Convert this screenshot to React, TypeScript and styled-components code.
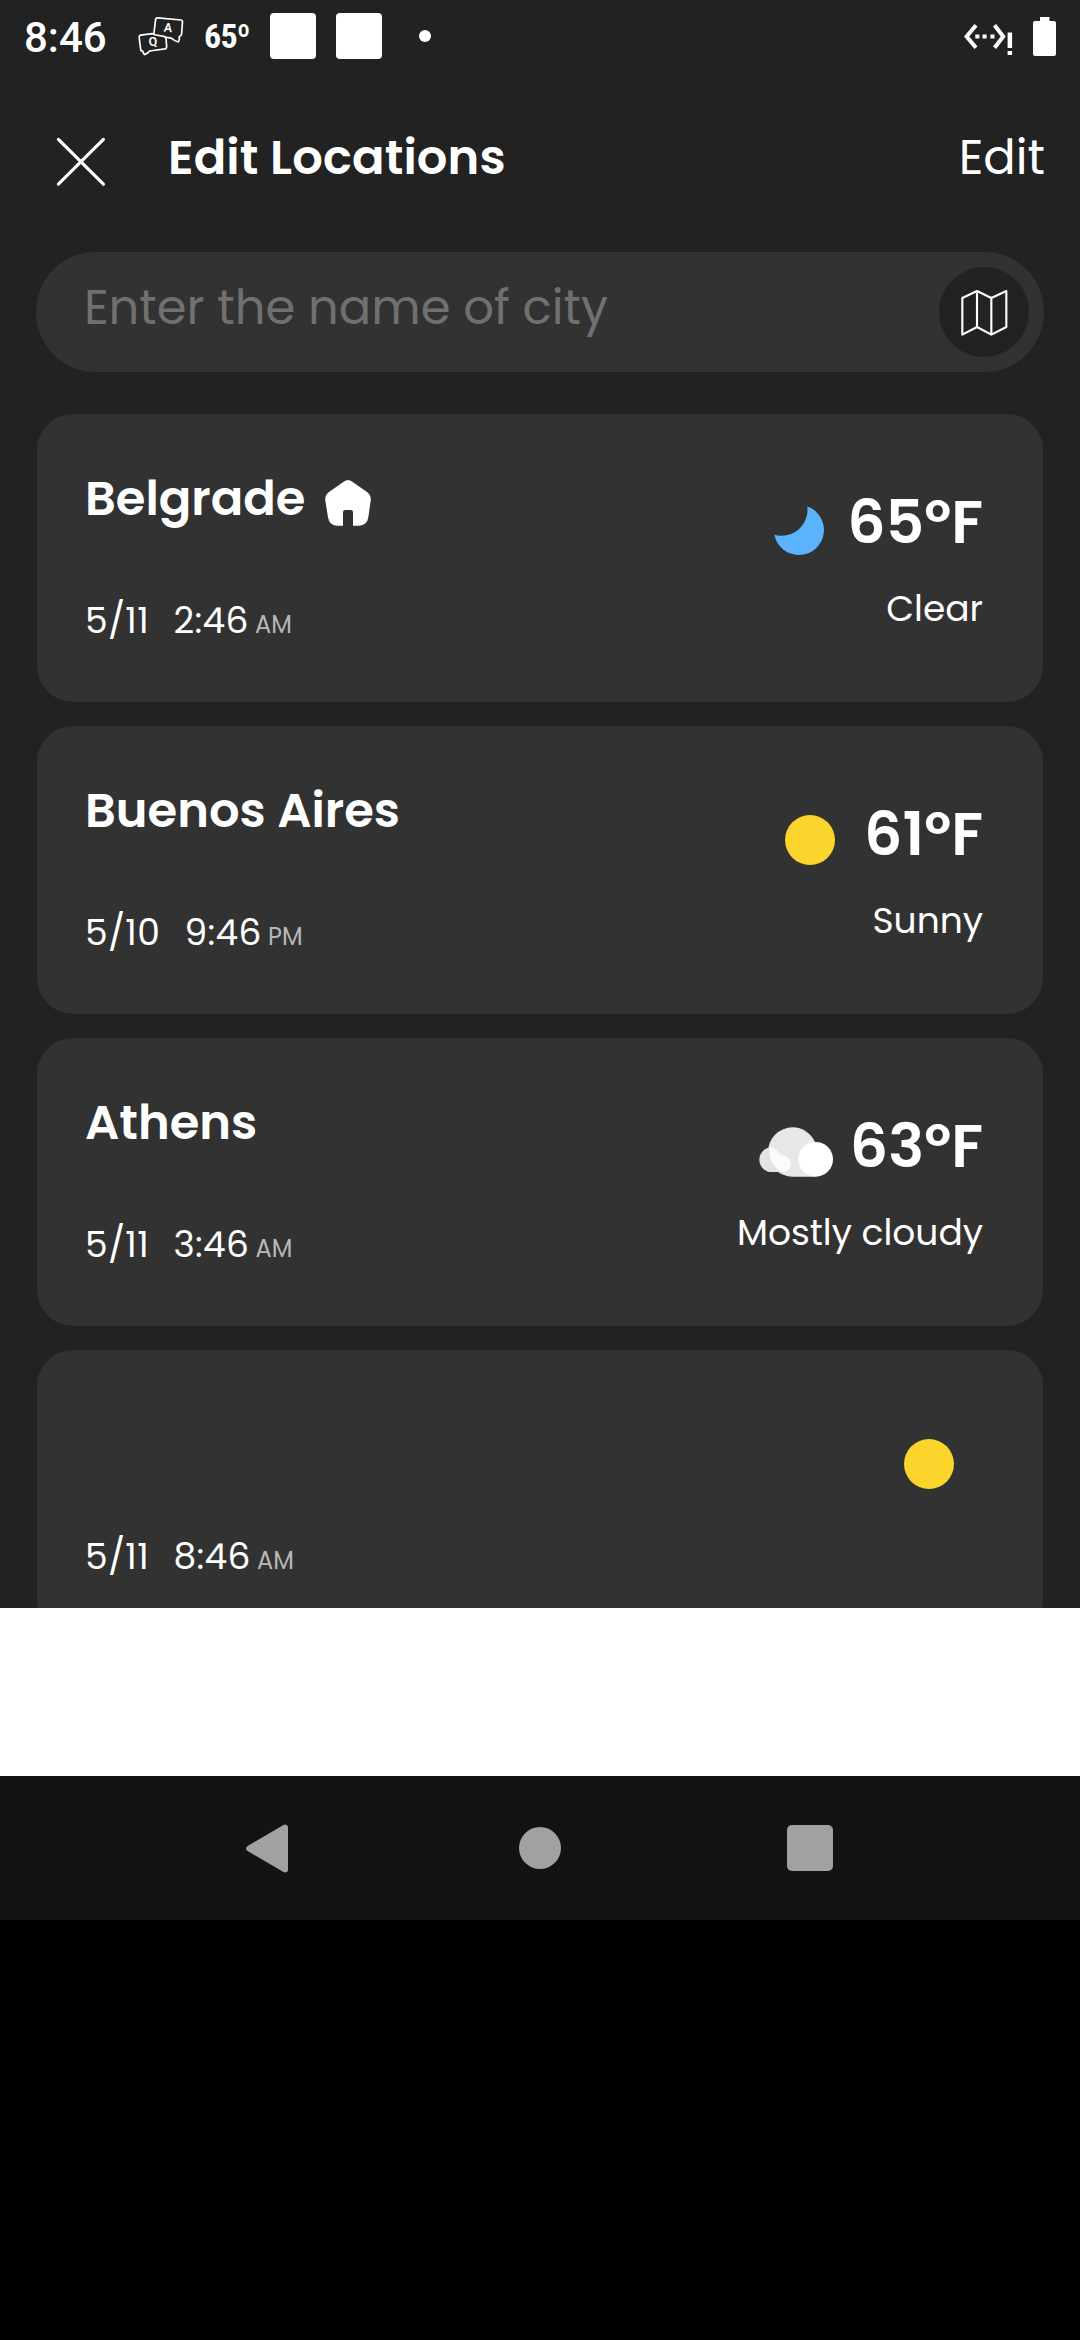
import React from "react";
import styled, { createGlobalStyle } from "styled-components";

const GlobalStyle = createGlobalStyle`
  *, *::before, *::after { box-sizing: border-box; }
  html, body { margin: 0; background: #000; }
  body {
    font-family: Poppins, Inter, "Liberation Sans", sans-serif;
    color: #fff;
  }
  svg { display: block; flex: none; }
`;

const Screen = styled.div`
  width: 1080px;
  height: 2340px;
  display: flex;
  flex-direction: column;
  overflow: hidden;
  background: #000;
`;

const AppArea = styled.div`
  height: 1608px;
  flex: none;
  display: flex;
  flex-direction: column;
  overflow: hidden;
  background: #222;
`;

const StatusBar = styled.div`
  height: 72px;
  flex: none;
  display: flex;
  justify-content: space-between;
  padding: 0 24px;
  font-family: Roboto, sans-serif;
`;

const StatusGroup = styled.div<{ $gap?: number }>`
  display: flex;
  align-items: center;
  gap: ${(p) => p.$gap ?? 0}px;
`;

const Clock = styled.span`
  width: 114px;
  padding-top: 3px;
  font-size: 42px;
  font-weight: 500;
`;

const StatusTemp = styled.span`
  width: 66px;
  margin-left: 20px;
  font: 700 34px "Roboto Condensed", Roboto, sans-serif;
  letter-spacing: -0.8px;
`;

const Notification = styled.span`
  width: 46px;
  height: 46px;
  margin-right: 20px;
  border-radius: 4px;
  background: #fff;
`;

const Dot = styled.span`
  width: 12px;
  height: 12px;
  margin-left: 17px;
  border-radius: 50%;
  background: #fff;
`;

const Header = styled.header`
  height: 60px;
  flex: none;
  display: flex;
  margin: 56px 35px 64px 36px;
  padding-left: 20px;
  line-height: 60px;
  font-size: 48px;

  svg { margin-top: 9px; }
`;

const Title = styled.h1`
  flex: 1;
  margin: 0 0 0 62px;
  font-size: 48px;
  font-weight: 600;
  letter-spacing: 0.12px;
`;

const EditAction = styled.span`
  font-weight: 400;
`;

const SearchBar = styled.div`
  height: 120px;
  flex: none;
  display: flex;
  align-items: center;
  justify-content: space-between;
  margin: 0 36px 42px;
  padding: 0 15px 0 48px;
  border-radius: 60px;
  background: #323232;
`;

const Placeholder = styled.span`
  padding-bottom: 8px;
  font-size: 48px;
  line-height: 60px;
  color: #707070;
`;

const MapButton = styled.span`
  width: 90px;
  height: 90px;
  display: flex;
  align-items: center;
  justify-content: center;
  padding-top: 2px;
  border-radius: 50%;
  background: #222;
`;

const List = styled.div`
  display: flex;
  flex-direction: column;
  gap: 24px;
  padding: 0 37px;
`;

const Card = styled.article`
  height: 288px;
  flex: none;
  display: flex;
  justify-content: space-between;
  padding: 55px 60px 0 48px;
  border-radius: 36px;
  background: #323232;
`;

const CardLeft = styled.div`
  display: flex;
  flex-direction: column;
`;

const NameRow = styled.div`
  height: 60px;
  display: flex;
  gap: 20px;
  margin-bottom: 68px;

  svg { margin-top: 11px; }
`;

const City = styled.h2`
  margin: 0;
  font-size: 48px;
  font-weight: 600;
  line-height: 60px;
`;

const TimeRow = styled.div`
  display: flex;
  align-items: baseline;
  font-size: 36px;
  line-height: 48px;
  letter-spacing: 0.3px;
`;

const DateText = styled.span`
  margin-right: 24.5px;
`;

const TimeText = styled.span`
  margin-right: 6.4px;
`;

const Meridiem = styled.span`
  font-size: 24px;
  letter-spacing: 0;
  color: #b8b8b8;
`;

const Weather = styled.div`
  display: flex;
  flex-direction: column;
  align-items: flex-end;
  padding-top: 17px;
`;

const TempRow = styled.div`
  height: 72px;
  display: flex;
  margin-bottom: 27px;
`;

const IconSlot = styled.span<{ $top: number; $gap: number }>`
  margin: ${(p) => p.$top}px ${(p) => p.$gap}px 0 0;
`;

const Temp = styled.span`
  font-size: 60px;
  font-weight: 600;
  line-height: 72px;
`;

const Condition = styled.span`
  font-size: 36px;
  line-height: 48px;
`;

const BlankStrip = styled.div`
  height: 168px;
  flex: none;
  background: #fff;
`;

const NavBar = styled.nav`
  height: 144px;
  flex: none;
  display: flex;
  align-items: center;
  justify-content: space-between;
  padding: 0 247px 0 246px;
  background: #131313;

  svg:nth-child(2) { margin-left: 5px; }
`;

const ChatIcon = () => (
  <svg width="46" height="40" viewBox="138 16 46 40" fill="none" stroke="#fff" strokeWidth="1.7" strokeLinejoin="round">
    <path d="M153.8 34.5 155.6 19.4Q156 17.6 157.8 17.8L181 20Q182.6 20.2 182.5 21.8L181.6 34Q181.4 36 179.4 36.4 179.6 40.6 178.2 42 174.6 41 171.2 38.2L164.5 37" />
    <path d="M140.9 50.6Q139.6 43 139.2 37Q139.1 35.4 140.6 35.1L152.4 33.6Q154 34.8 156 35L164 36.4Q165.8 37 166 38.6L166.7 46.6Q166.8 48.4 165 48.8L149.6 51Q147.8 53.6 144.4 54.6 143 52.8 142.6 51Z" />
    <g fill="#fff" stroke="none" fontFamily="Roboto" fontWeight="600" fontSize="12.5" textAnchor="middle">
      <text x="168" y="32" transform="rotate(5 168 28)">A</text>
      <text x="153" y="46" transform="rotate(-5 153 42)">Q</text>
    </g>
  </svg>
);

const EthernetIcon = () => (
  <svg width="49" height="38" viewBox="964 17 49 38">
    <path d="M976 25.3 966.6 36.5 976 47.8M994.6 25.3 1003.2 36.5 994.6 47.8" fill="none" stroke="#fff" strokeWidth="4" />
    <path d="M975.3 34.6h4.1v4h-4.1zM982.5 34.6h4.1v4h-4.1zM990.4 34.6h4.1v4h-4.1zM1007.6 32.5h4.5v15.5h-4.5zM1007.6 51h4.5v4h-4.5z" fill="#fff" />
  </svg>
);

const BatteryIcon = () => (
  <svg width="23" height="39" viewBox="0 0 23 39" fill="#fff">
    <path d="M7 0h9.5v4H21q2 0 2 2v31q0 2-2 2H2q-2 0-2-2V6q0-2 2-2h5z" />
  </svg>
);

const CloseIcon = () => (
  <svg width="50" height="50" viewBox="0 0 50 50" stroke="#fff" strokeWidth="3.2" strokeLinecap="round">
    <path d="M2.4 2.4 47.4 47.2M47.4 2.4 2.4 47.2" />
  </svg>
);

const MapIcon = () => (
  <svg width="48" height="48" viewBox="956 178 144 144" fill="none" stroke="#fff" strokeWidth="6.4" strokeLinejoin="round">
    <path d="M963 205 1007 184 1050 205 1095 184V292L1050 315 1007 292 963 315ZM1007 184V292M1050 205V315" />
  </svg>
);

const HomeIcon = () => (
  <svg width="46" height="46" viewBox="978 240 138 138" fill="#fff">
    <path d="M1047 240Q1053 240 1060 245L1105 277Q1117 286 1115 302L1108 352Q1104 377 1081 377H1062V336Q1062 330 1056 330H1038Q1032 330 1032 336V377H1013Q991 377 987 352L979 302Q977 286 989 277L1034 245Q1041 240 1047 240Z" />
  </svg>
);

const MoonIcon = () => (
  <svg width="50" height="50" viewBox="0 0 50 50">
    <path d="M33.3 1.4A25 25 0 1 1 .4 29.7A26 26 0 0 0 33.3 1.4Z" fill="#5bb2fd" />
  </svg>
);

const SunIcon = () => (
  <svg width="50" height="50" viewBox="0 0 50 50">
    <circle cx="25" cy="25" r="25" fill="#fbd52b" />
  </svg>
);

const CloudIcon = () => (
  <svg width="74" height="50" viewBox="116 290 222 150">
    <path d="M217 291A74 74 0 0 1 284 335V439H217A74 74 0 0 1 217 291Z" fill="#e7e7e7" />
    <path d="M154 351A37 37 0 0 0 154 425H180Q163 412 153 392 145 372 148 351Z" fill="#e3e3e3" />
    <path d="M148 351Q168 353 179 373Q212 376 212 402 208 423 187 425H180Q163 412 153 392 145 372 148 351Z" fill="#fbfbfb" />
    <circle cx="286" cy="387" r="52" fill="#fff" />
  </svg>
);

const BackIcon = () => (
  <svg width="42" height="49" viewBox="0 0 42 49" fill="#a1a1a1" stroke="#a1a1a1" strokeWidth="6" strokeLinejoin="round">
    <path d="M3.2 24.5 39 3.6V45.4Z" />
  </svg>
);

const HomeButtonIcon = () => (
  <svg width="42" height="42" viewBox="0 0 42 42">
    <circle cx="21" cy="21" r="21" fill="#a1a1a1" />
  </svg>
);

const RecentsIcon = () => (
  <svg width="46" height="46" viewBox="0 0 46 46">
    <rect width="46" height="46" rx="5" fill="#a1a1a1" />
  </svg>
);

interface Location {
  name?: string;
  home?: boolean;
  date: string;
  time: string;
  meridiem: string;
  icon: React.ReactNode;
  iconTop: number;
  iconGap: number;
  temp?: string;
  condition?: string;
}

const locations: Location[] = [
  { name: "Belgrade", home: true, date: "5/11", time: "2:46", meridiem: "AM", icon: <MoonIcon />, iconTop: 19, iconGap: 23, temp: "65ºF", condition: "Clear" },
  { name: "Buenos Aires", date: "5/10", time: "9:46", meridiem: "PM", icon: <SunIcon />, iconTop: 17, iconGap: 29, temp: "61ºF", condition: "Sunny" },
  { name: "Athens", date: "5/11", time: "3:46", meridiem: "AM", icon: <CloudIcon />, iconTop: 17, iconGap: 17, temp: "63ºF", condition: "Mostly cloudy" },
  { date: "5/11", time: "8:46", meridiem: "AM", icon: <SunIcon />, iconTop: 17, iconGap: 29 },
];

export default function App() {
  return (
    <>
      <GlobalStyle />
      <Screen>
        <AppArea>
          <StatusBar>
            <StatusGroup>
              <Clock>8:46</Clock>
              <ChatIcon />
              <StatusTemp>65º</StatusTemp>
              <Notification />
              <Notification />
              <Dot />
            </StatusGroup>
            <StatusGroup $gap={20}>
              <EthernetIcon />
              <BatteryIcon />
            </StatusGroup>
          </StatusBar>
          <Header>
            <CloseIcon />
            <Title>Edit Locations</Title>
            <EditAction>Edit</EditAction>
          </Header>
          <SearchBar>
            <Placeholder>Enter the name of city</Placeholder>
            <MapButton>
              <MapIcon />
            </MapButton>
          </SearchBar>
          <List>
            {locations.map((l, i) => (
              <Card key={i}>
                <CardLeft>
                  <NameRow>
                    {l.name && <City>{l.name}</City>}
                    {l.home && <HomeIcon />}
                  </NameRow>
                  <TimeRow>
                    <DateText>{l.date}</DateText>
                    <TimeText>{l.time}</TimeText>
                    <Meridiem>{l.meridiem}</Meridiem>
                  </TimeRow>
                </CardLeft>
                <Weather>
                  <TempRow>
                    <IconSlot $top={l.iconTop} $gap={l.iconGap}>
                      {l.icon}
                    </IconSlot>
                    {l.temp && <Temp>{l.temp}</Temp>}
                  </TempRow>
                  {l.condition && <Condition>{l.condition}</Condition>}
                </Weather>
              </Card>
            ))}
          </List>
        </AppArea>
        <BlankStrip />
        <NavBar>
          <BackIcon />
          <HomeButtonIcon />
          <RecentsIcon />
        </NavBar>
      </Screen>
    </>
  );
}
